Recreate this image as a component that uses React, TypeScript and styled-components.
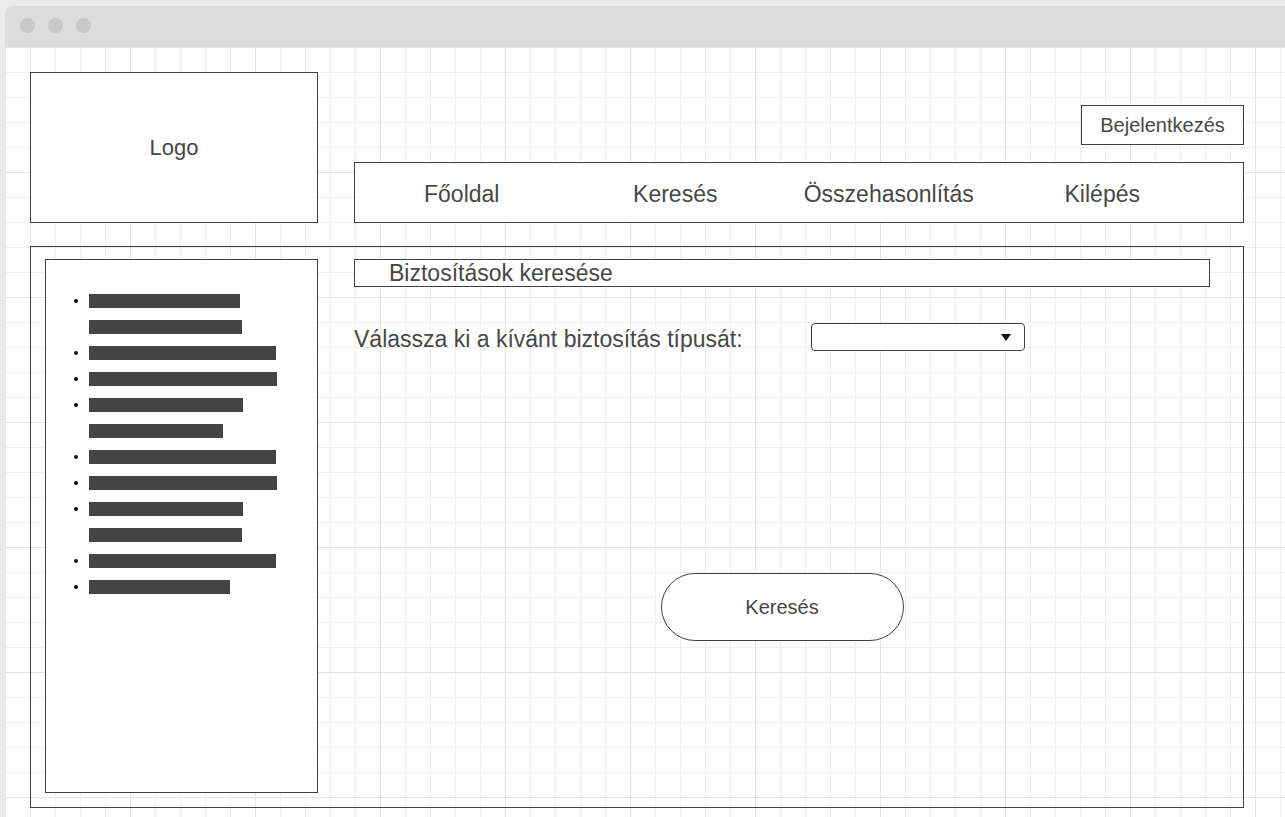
import React from "react";
import styled, { createGlobalStyle } from "styled-components";

const GlobalStyle = createGlobalStyle`
  html, body { margin: 0; padding: 0; }
  body {
    background: #ebebeb;
    font-family: "Liberation Sans", Arial, sans-serif;
    color: #474747;
    overflow: hidden;
  }
`;

const Window = styled.div`
  margin: 6px 0 0 5px;
  width: 1280px;
  height: 811px;
  border-radius: 7px 0 0 0;
  overflow: hidden;
  background: #fff;
  display: flex;
  flex-direction: column;
`;

const TitleBar = styled.div`
  height: 41px;
  flex: none;
  background: #dcdcdc;
  display: flex;
  align-items: center;
  gap: 13px;
  padding-left: 15px;
  padding-bottom: 2px;
  box-sizing: border-box;
`;

const Dot = styled.span`
  width: 15px;
  height: 15px;
  border-radius: 50%;
  background: #c8c8c8;
`;

const Canvas = styled.div`
  flex: 1;
  background-color: #fff;
  background-image:
    linear-gradient(to right, #e4e4e4 1px, transparent 1px),
    linear-gradient(to bottom, #e4e4e4 1px, transparent 1px),
    linear-gradient(to right, #efefef 1px, transparent 1px),
    linear-gradient(to bottom, #efefef 1px, transparent 1px);
  background-size: 125px 125px, 125px 125px, 25px 25px, 25px 25px;
  padding: 25px 0 0 25px;
  box-sizing: border-box;
`;

const TopRow = styled.div`
  display: flex;
  gap: 36px;
`;

const LogoBox = styled.div`
  width: 288px;
  height: 151px;
  box-sizing: border-box;
  border: 1px solid #404040;
  background: #fff;
  display: flex;
  align-items: center;
  justify-content: center;
  font-size: 22px;
`;

const HeaderRight = styled.div`
  width: 890px;
  display: flex;
  flex-direction: column;
  align-items: flex-end;
  padding-top: 33px;
  gap: 17px;
`;

const LoginButton = styled.div`
  width: 163px;
  height: 40px;
  box-sizing: border-box;
  border: 1px solid #404040;
  background: #fff;
  display: flex;
  align-items: center;
  justify-content: center;
  font-size: 20px;
`;

const Nav = styled.nav`
  width: 890px;
  height: 61px;
  box-sizing: border-box;
  border: 1px solid #404040;
  background: #fff;
  display: grid;
  grid-template-columns: repeat(4, 213.5px);
  align-items: center;
  padding-top: 3px;
`;

const NavItem = styled.span`
  text-align: center;
  font-size: 23px;
`;

const MainFrame = styled.div`
  margin-top: 23px;
  width: 1214px;
  height: 562px;
  box-sizing: border-box;
  border: 1px solid #404040;
  display: flex;
  gap: 36px;
  padding: 12px 14px 14px 14px;
`;

const Sidebar = styled.ul`
  width: 273px;
  height: 534px;
  box-sizing: border-box;
  border: 1px solid #404040;
  background: #fff;
  margin: 0;
  padding: 34px 0 0 0;
  list-style: none;
  display: flex;
  flex-direction: column;
  gap: 12px;
`;

const Item = styled.li`
  display: flex;
`;

const BulletCol = styled.span`
  width: 43px;
  flex: none;
  display: flex;
  justify-content: flex-end;
  padding-right: 11px;
  box-sizing: border-box;
`;

const Bullet = styled.span`
  width: 4px;
  height: 4px;
  margin-top: 5px;
  border-radius: 50%;
  background: #111;
`;

const Bars = styled.span`
  display: flex;
  flex-direction: column;
  gap: 12px;
`;

const Bar = styled.span<{ $w: number }>`
  display: block;
  height: 14px;
  width: ${(p) => p.$w}px;
  background: #444;
`;

const Content = styled.div`
  width: 856px;
  display: flex;
  flex-direction: column;
`;

const Heading = styled.div`
  height: 28px;
  box-sizing: border-box;
  border: 1px solid #404040;
  background: #fff;
  padding-left: 34px;
  font-size: 23px;
  line-height: 26px;
  white-space: nowrap;
`;

const FieldRow = styled.div`
  margin-top: 36px;
  display: grid;
  grid-template-columns: 457px 214px;
  align-items: center;
`;

const Label = styled.span`
  font-size: 23px;
  line-height: 28px;
  position: relative;
  top: 2px;
`;

const Select = styled.div`
  height: 28px;
  box-sizing: border-box;
  border: 1px solid #404040;
  border-radius: 4px;
  background: #fff;
  display: flex;
  align-items: center;
  justify-content: flex-end;
  padding-right: 13px;
`;

const SearchButton = styled.div`
  margin-top: 222px;
  align-self: center;
  width: 243px;
  height: 68px;
  box-sizing: border-box;
  border: 1px solid #404040;
  border-radius: 34px;
  background: #fff;
  display: flex;
  align-items: center;
  justify-content: center;
  font-size: 20px;
`;

const items: { bullet: boolean; bars: number[] }[] = [
  { bullet: true, bars: [151, 153] },
  { bullet: true, bars: [187] },
  { bullet: true, bars: [188] },
  { bullet: true, bars: [154, 134] },
  { bullet: true, bars: [187] },
  { bullet: true, bars: [188] },
  { bullet: true, bars: [154, 153] },
  { bullet: true, bars: [187] },
  { bullet: true, bars: [141] },
];

export default function App() {
  return (
    <>
      <GlobalStyle />
      <Window>
        <TitleBar>
          <Dot />
          <Dot />
          <Dot />
        </TitleBar>
        <Canvas>
          <TopRow>
            <LogoBox>Logo</LogoBox>
            <HeaderRight>
              <LoginButton>Bejelentkezés</LoginButton>
              <Nav>
                <NavItem>Főoldal</NavItem>
                <NavItem>Keresés</NavItem>
                <NavItem>Összehasonlítás</NavItem>
                <NavItem>Kilépés</NavItem>
              </Nav>
            </HeaderRight>
          </TopRow>
          <MainFrame>
            <Sidebar>
              {items.map((it, i) => (
                <Item key={i}>
                  <BulletCol>{it.bullet && <Bullet />}</BulletCol>
                  <Bars>
                    {it.bars.map((w, j) => (
                      <Bar key={j} $w={w} />
                    ))}
                  </Bars>
                </Item>
              ))}
            </Sidebar>
            <Content>
              <Heading>Biztosítások keresése</Heading>
              <FieldRow>
                <Label>Válassza ki a kívánt biztosítás típusát:</Label>
                <Select>
                  <svg width="10" height="7" viewBox="0 0 10 7">
                    <path d="M0 0 L10 0 L5 7 Z" fill="#111" />
                  </svg>
                </Select>
              </FieldRow>
              <SearchButton>Keresés</SearchButton>
            </Content>
          </MainFrame>
        </Canvas>
      </Window>
    </>
  );
}
